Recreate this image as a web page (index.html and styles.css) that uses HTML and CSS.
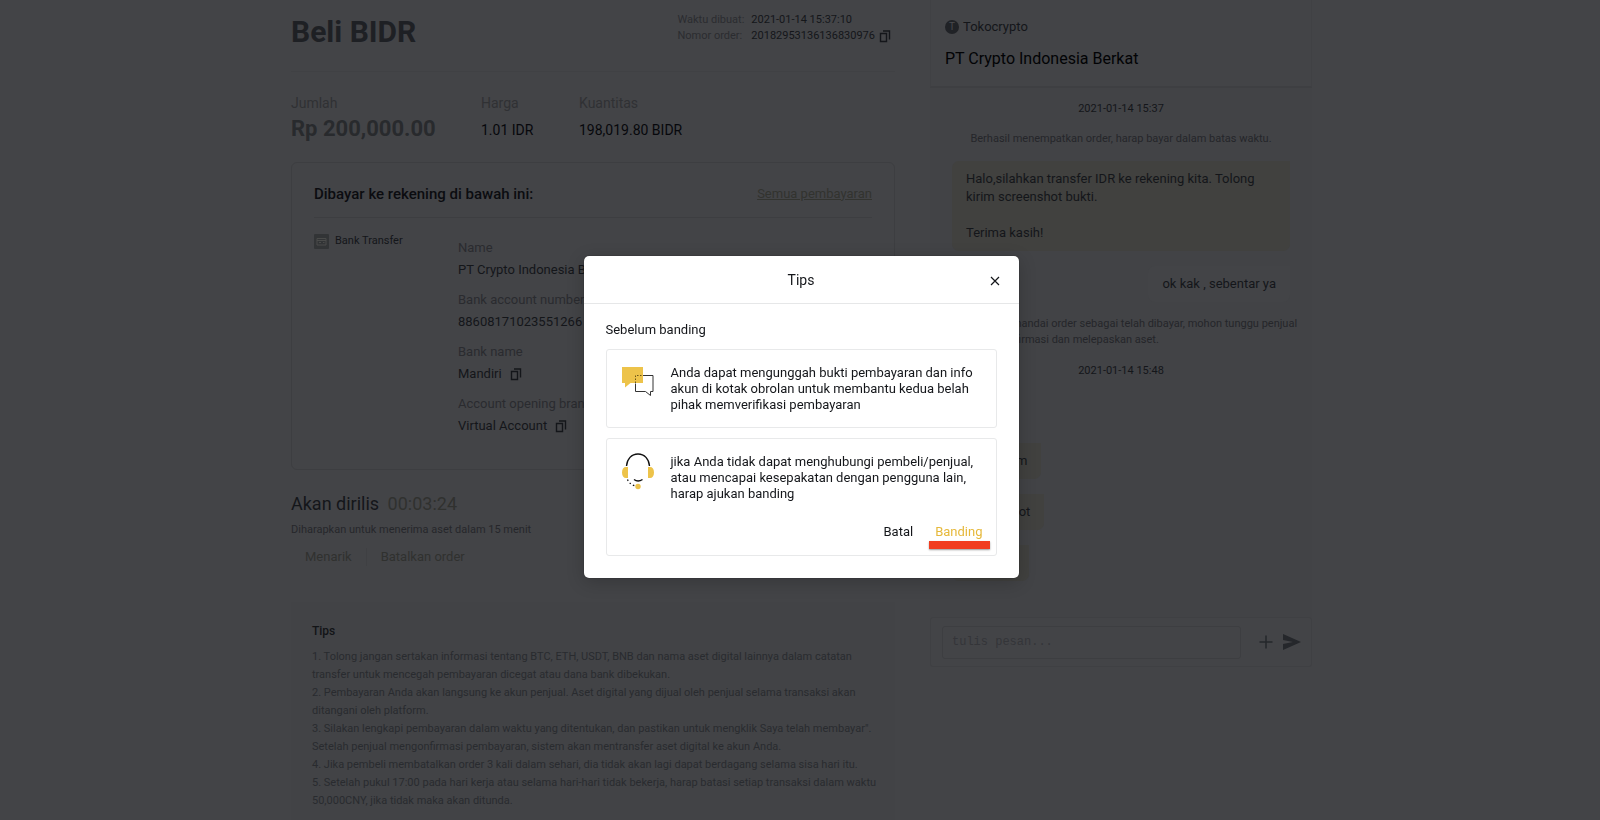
FILE: index.html
```html
<!DOCTYPE html>
<html lang="id">
<head>
  <meta charset="UTF-8">
  <meta name="viewport" content="width=device-width, initial-scale=1.0">
  <title>Beli BIDR</title>
  <link rel="stylesheet" href="styles.css">
</head>
<body>
  <svg class="sprite" aria-hidden="true">
    <symbol id="icon-copy" viewBox="0 0 12 13">
      <path d="M1.500 3.500h6v8h-6zM4 1h6.500v8.500" fill="none" stroke="currentColor" stroke-width="1.400"/>
    </symbol>
  </svg>

  <div class="page">
    <main class="order">
      <header class="order-header">
        <h1>Beli BIDR</h1>
        <dl class="order-meta">
          <dt>Waktu dibuat:</dt>
          <dd>2021-01-14 15:37:10</dd>
          <dt>Nomor order:</dt>
          <dd>20182953136136830976
            <button class="copy-button" aria-label="Salin nomor order"><svg><use href="#icon-copy"/></svg></button>
          </dd>
        </dl>
      </header>

      <dl class="summary">
        <div class="summary-item total">
          <dt>Jumlah</dt>
          <dd>Rp 200,000.00</dd>
        </div>
        <div class="summary-item price">
          <dt>Harga</dt>
          <dd>1.01 IDR</dd>
        </div>
        <div class="summary-item">
          <dt>Kuantitas</dt>
          <dd>198,019.80 BIDR</dd>
        </div>
      </dl>

      <section class="payment-card">
        <div class="payment-header">
          <h2>Dibayar ke rekening di bawah ini:</h2>
          <a href="#">Semua pembayaran</a>
        </div>
        <div class="payment-body">
          <div class="payment-method">
            <svg class="bank-icon" viewBox="0 0 15 15">
              <rect width="15" height="15" rx="1" fill="#323436"/>
              <path d="M3 4.500h9v6.500h-9zM3 6.500h9M5 8.500h2M9 8.500h1.500" fill="none" stroke="#4a4b4a"/>
            </svg>
            <span>Bank Transfer</span>
          </div>
          <dl class="bank-details">
            <dt>Name</dt>
            <dd>PT Crypto Indonesia Berkat</dd>
            <dt>Bank account number</dt>
            <dd>88608171023551266 <button class="copy-button" aria-label="Salin nomor rekening"><svg><use href="#icon-copy"/></svg></button></dd>
            <dt>Bank name</dt>
            <dd>Mandiri <button class="copy-button" aria-label="Salin nama bank"><svg><use href="#icon-copy"/></svg></button></dd>
            <dt>Account opening branch</dt>
            <dd>Virtual Account <button class="copy-button" aria-label="Salin cabang"><svg><use href="#icon-copy"/></svg></button></dd>
          </dl>
        </div>
      </section>

      <section class="release">
        <h2>Akan dirilis <span class="timer">00:03:24</span></h2>
        <p>Diharapkan untuk menerima aset dalam 15 menit</p>
        <div class="release-actions">
          <button>Menarik</button>
          <button>Batalkan order</button>
        </div>
      </section>

      <section class="tips">
        <h3>Tips</h3>
        <p>1. Tolong jangan sertakan informasi tentang BTC, ETH, USDT, BNB dan nama aset digital lainnya dalam catatan<br>transfer untuk mencegah pembayaran dicegat atau dana bank dibekukan.</p>
        <p>2. Pembayaran Anda akan langsung ke akun penjual. Aset digital yang dijual oleh penjual selama transaksi akan<br>ditangani oleh platform.</p>
        <p>3. Silakan lengkapi pembayaran dalam waktu yang ditentukan, dan pastikan untuk mengklik Saya telah membayar".<br>Setelah penjual mengonfirmasi pembayaran, sistem akan mentransfer aset digital ke akun Anda.</p>
        <p>4. Jika pembeli membatalkan order 3 kali dalam sehari, dia tidak akan lagi dapat berdagang selama sisa hari itu.</p>
        <p>5. Setelah pukul 17:00 pada hari kerja atau selama hari-hari tidak bekerja, harap batasi setiap transaksi dalam waktu<br>50,000CNY, jika tidak maka akan ditunda.</p>
      </section>
    </main>

    <aside class="chat">
      <header class="chat-header">
        <div class="merchant"><span class="avatar">T</span>Tokocrypto</div>
        <h2>PT Crypto Indonesia Berkat</h2>
      </header>
      <div class="chat-log">
        <time>2021-01-14 15:37</time>
        <p class="notice">Berhasil menempatkan order, harap bayar dalam batas waktu.</p>
        <p class="bubble bubble-wide">Halo,silahkan transfer IDR ke rekening kita. Tolong<br>kirim screenshot bukti.<br><br>Terima kasih!</p>
        <p class="bubble bubble-own">ok kak , sebentar ya</p>
        <p class="notice notice-long">Anda telah menandai order sebagai telah dibayar, mohon tunggu penjual<br>untuk mengonfirmasi dan melepaskan aset.</p>
        <time>2021-01-14 15:48</time>
        <div class="replies">
          <p class="bubble">Halo, kirim</p>
          <p class="bubble">screenshot</p>
          <p class="bubble">buktinya</p>
        </div>
      </div>
      <form class="composer">
        <input type="text" placeholder="tulis pesan..." aria-label="Pesan">
        <button type="button" aria-label="Lampirkan">
          <svg width="14" height="14" viewBox="0 0 14 14"><path d="M7 .5v13M.5 7h13" stroke="currentColor" stroke-width="1.500"/></svg>
        </button>
        <button type="button" aria-label="Kirim">
          <svg width="18" height="16" viewBox="0 0 18 16"><path d="M0 0l18 8-18 8v-6l10-2-10-2z" fill="currentColor"/></svg>
        </button>
      </form>
    </aside>
  </div>

  <div class="overlay">
    <div class="modal" role="dialog" aria-modal="true" aria-labelledby="modal-title">
      <header class="modal-header">
        <h2 id="modal-title">Tips</h2>
        <button class="close-button" aria-label="Tutup">
          <svg width="10" height="10" viewBox="0 0 10 10"><path d="M1 1l8 8M9 1l-8 8" stroke="currentColor" stroke-width="1.200"/></svg>
        </button>
      </header>
      <div class="modal-body">
        <p class="modal-lead">Sebelum banding</p>
        <section class="option">
          <svg class="option-icon" width="32" height="38" viewBox="0 0 32 38">
            <path d="M0 3h21v16H8.500L3 23.500V19H0z" fill="#edc34a"/>
            <path d="M21 11.500h10v16h-2.500v4l-5-4H13.500v-8" fill="none" stroke="#333" stroke-width="1"/>
            <path d="M13.500 19v-7.500H21" fill="none" stroke="#6b5517" stroke-dasharray="1.500 1.500"/>
          </svg>
          <p>Anda dapat mengunggah bukti pembayaran dan info<br>akun di kotak obrolan untuk membantu kedua belah<br>pihak memverifikasi pembayaran</p>
        </section>
        <section class="option">
          <svg class="option-icon" width="32" height="38" viewBox="0 0 32 38">
            <path d="M4.500 13C5 6 9.500 1 16 1s11 5 11.500 12" fill="none" stroke="#111" stroke-width="1.400"/>
            <path d="M6 14v11H4c-2.500 0-4-2-4-5.500S1.500 14 4 14z" fill="#edc34a"/>
            <path d="M26 14v11h2c2.500 0 4-2 4-5.500S30.500 14 28 14z" fill="#edc34a"/>
            <path d="M12 26.500q4 3 8.500 0" fill="none" stroke="#111" stroke-width="1.400"/>
            <path d="M5.500 26.500q2 5 8 6.500" fill="none" stroke="#111" stroke-width="1.300" stroke-dasharray="1.500 2.500"/>
            <circle cx="16" cy="33.500" r="2.700" fill="#edc34a"/>
          </svg>
          <p>jika Anda tidak dapat menghubungi pembeli/penjual,<br>atau mencapai kesepakatan dengan pengguna lain,<br>harap ajukan banding</p>
          <div class="option-actions">
            <button>Batal</button>
            <button class="appeal">Banding</button>
          </div>
        </section>
      </div>
    </div>
  </div>
</body>
</html>
```
FILE: styles.css
```css
* {
  margin: 0;
  padding: 0;
  box-sizing: border-box;
}

body {
  font-family: Roboto, "Noto Sans", sans-serif;
  font-size: 13px;
  line-height: 18px;
  background: #434447;
  color: #14161a;
  height: 100vh;
  padding-left: 3px;
  overflow: hidden;
}

button {
  font: inherit;
  color: inherit;
  background: none;
  border: none;
  cursor: pointer;
}

h1, h2, h3 {
  font-weight: 500;
}

.sprite {
  display: none;
}

.page {
  max-width: 1021px;
  margin: 0 auto;
  display: grid;
  grid-template-columns: minmax(0, 1fr) 382px;
  gap: 35px;
  align-items: start;
}

/* order */
.order-header {
  display: flex;
  justify-content: space-between;
  height: 72px;
  padding: 12px 4px 0 0;
  border-bottom: 1px solid #404144;
}

.order-header h1 {
  font-size: 30px;
  line-height: 40px;
  font-weight: 700;
  color: #1e2024;
}

.order-meta {
  display: grid;
  grid-template-columns: auto auto;
  align-content: start;
  column-gap: 7px;
  font-size: 11px;
  line-height: 16px;
}

.order-meta dt {
  color: #2b2c30;
}

.order-meta dd {
  display: flex;
  align-items: center;
  gap: 4px;
}

.copy-button {
  display: flex;
}

.copy-button svg {
  width: 12px;
  height: 13px;
}

.summary {
  display: flex;
  padding: 21px 0 18px;
}

.summary-item {
  font-size: 14px;
}

.summary-item dt {
  line-height: 20px;
  color: #303134;
}

.summary-item dd {
  padding-top: 3px;
  line-height: 28px;
  color: #07080c;
}

.total {
  width: 190px;
}

.summary .total dd {
  padding-top: 2px;
  font-size: 22px;
  font-weight: 700;
  color: #282a2d;
}

.price {
  width: 98px;
}

.payment-card {
  padding: 0 22px;
  height: 308px;
  border: 1px solid #3d3e41;
  border-radius: 6px;
}

.payment-header {
  display: flex;
  justify-content: space-between;
  align-items: center;
  height: 55px;
  padding-top: 7px;
  border-bottom: 1px solid #3d3e41;
}

.payment-header h2 {
  font-size: 15px;
  color: #0b0c10;
}

.payment-header a {
  color: #32332f;
}

.payment-body {
  display: grid;
  grid-template-columns: 144px 1fr;
  padding-top: 13px;
}

.payment-method {
  display: flex;
  align-items: center;
  gap: 6px;
  height: 20px;
  font-size: 11px;
}

.bank-icon {
  width: 15px;
  height: 15px;
}

.bank-details dt {
  padding-top: 8px;
  color: #2a2b2f;
}

.bank-details dd {
  display: flex;
  align-items: center;
  gap: 8px;
  line-height: 26px;
}

.release {
  padding: 21px 0 36px;
}

.release h2 {
  font-size: 18px;
  line-height: 26px;
  font-weight: 400;
}

.timer {
  margin-left: 4px;
  color: #30312f;
}

.release p {
  padding: 5px 0 10px;
  font-size: 11px;
  line-height: 16px;
  color: #26272b;
}

.release-actions {
  display: flex;
  color: #30312f;
}

.release-actions button {
  padding: 0 14px;
}

.release-actions button + button {
  border-left: 1px solid #3f4043;
}

.tips {
  padding: 20px 21px;
  background: #424346;
  font-size: 11px;
  color: #292b2f;
  white-space: nowrap;
}

.tips h3 {
  margin-bottom: 8px;
  font-size: 12px;
  color: #121417;
}

/* chat */
.chat {
  background: #424346;
}

.chat-header {
  height: 88px;
  padding: 18px 14px;
  background: #434447;
  border: 1px solid #404144;
  border-top: none;
  border-bottom: 2px solid #3e3f42;
}

.merchant {
  display: flex;
  align-items: center;
  gap: 4px;
}

.avatar {
  width: 14px;
  height: 14px;
  border-radius: 50%;
  background: #202226;
  color: #4a4b4e;
  font-size: 10px;
  line-height: 14px;
  text-align: center;
}

.chat-header h2 {
  margin-top: 12px;
  font-size: 16px;
  line-height: 22px;
  font-weight: 400;
  color: #020305;
}

.chat-log {
  display: flex;
  flex-direction: column;
  align-items: flex-start;
  height: 529px;
  padding: 12px 22px 0;
}

.chat-log time {
  align-self: center;
  font-size: 11px;
}

.notice {
  align-self: center;
  margin-top: 13px;
  font-size: 11px;
  line-height: 16px;
  color: #25262a;
}

.bubble {
  padding: 9px 14px;
  border-radius: 7px 0 7px 7px;
  background: #41413f;
}

.bubble-wide {
  align-self: stretch;
  margin-top: 14px;
}

.bubble-own {
  align-self: flex-end;
  margin-top: 15px;
  background: #434447;
}

.notice-long {
  margin: 14px 0;
  white-space: nowrap;
}

.replies {
  display: grid;
  justify-items: start;
  gap: 15px;
  margin-top: 63px;
}

.composer {
  display: flex;
  align-items: center;
  gap: 10px;
  height: 50px;
  padding: 0 10px 0 11px;
  border: 1px solid #3f4043;
  border-radius: 3px;
  background: #434447;
  color: #25272b;
}

.composer input {
  flex: 1;
  min-width: 0;
  height: 33px;
  margin-right: 8px;
  padding: 0 9px;
  border: 1px solid #3d3e41;
  border-radius: 3px;
  background: none;
  font: 12px "Liberation Mono", monospace;
}

.composer input::placeholder {
  color: #343539;
}

.composer button {
  display: flex;
}

/* modal */
.overlay {
  position: fixed;
  inset: 0;
  display: flex;
  align-items: center;
  justify-content: center;
  padding: 14px 0 0 2px;
}

.modal {
  width: 435px;
  border-radius: 5px;
  background: #fff;
  color: #14161a;
  box-shadow: 0 0 1px #111, 0 4px 18px rgba(0, 0, 0, 0.2);
}

.modal-header {
  position: relative;
  height: 48px;
  border-bottom: 1px solid #e6e7e8;
  text-align: center;
}

.modal-header h2 {
  font-size: 14px;
  line-height: 48px;
  font-weight: 400;
}

.close-button {
  position: absolute;
  top: 20px;
  right: 19px;
  display: flex;
}

.modal-body {
  display: grid;
  gap: 10px;
  padding: 17px 22px 22px;
}

.option {
  display: grid;
  grid-template-columns: 49px 1fr;
  padding: 15px 13px 14px 15px;
  border: 1px solid #e8e9ea;
  border-radius: 3px;
  line-height: 16px;
}

.option-icon {
  margin-top: -1px;
}

.option-actions {
  grid-column: 1 / -1;
  display: flex;
  justify-content: flex-end;
  gap: 22px;
  padding-top: 21px;
}

.option-actions button {
  line-height: 18px;
}

.appeal {
  position: relative;
  color: #e6b93c;
}

/* red marker under the appeal action */
.appeal::after {
  content: "";
  position: absolute;
  left: -6px;
  right: -7px;
  top: 18px;
  height: 8px;
  background: #f13d20;
  box-shadow: 0 1px 2px rgba(0, 0, 0, 0.4);
}
```
